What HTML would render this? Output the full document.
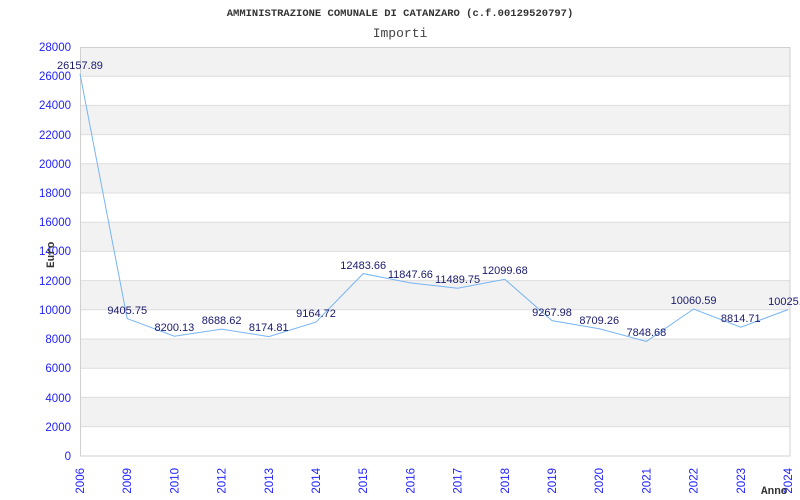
<!DOCTYPE html>
<html><head><style>body{margin:0;background:#fff}svg{display:block}</style></head><body>
<svg width="800" height="500" xmlns="http://www.w3.org/2000/svg">
<text x="400" y="16" text-anchor="middle" font-family="Liberation Mono,monospace" font-weight="bold" font-size="10.5" fill="#333">AMMINISTRAZIONE COMUNALE DI CATANZARO (c.f.00129520797)</text>
<text x="400" y="37" text-anchor="middle" font-family="Liberation Mono,monospace" font-size="13" fill="#444">Importi</text>
<g fill="#f2f2f2">
<rect x="80" y="47" width="710" height="29.2"/><rect x="80" y="105.4" width="710" height="29.2"/><rect x="80" y="163.8" width="710" height="29.2"/><rect x="80" y="222.2" width="710" height="29.2"/><rect x="80" y="280.6" width="710" height="29.2"/><rect x="80" y="339" width="710" height="29.2"/><rect x="80" y="397.4" width="710" height="29.2"/>
</g>
<g stroke="#dddddd" stroke-width="1">
<line x1="80" x2="790" y1="76.2" y2="76.2"/><line x1="80" x2="790" y1="105.4" y2="105.4"/><line x1="80" x2="790" y1="134.6" y2="134.6"/><line x1="80" x2="790" y1="163.8" y2="163.8"/><line x1="80" x2="790" y1="193" y2="193"/><line x1="80" x2="790" y1="222.2" y2="222.2"/><line x1="80" x2="790" y1="251.4" y2="251.4"/><line x1="80" x2="790" y1="280.6" y2="280.6"/><line x1="80" x2="790" y1="309.8" y2="309.8"/><line x1="80" x2="790" y1="339" y2="339"/><line x1="80" x2="790" y1="368.2" y2="368.2"/><line x1="80" x2="790" y1="397.4" y2="397.4"/><line x1="80" x2="790" y1="426.6" y2="426.6"/>
</g>
<rect x="80.5" y="47.5" width="709.5" height="408.5" fill="none" stroke="#d0d0d0"/>
<g font-family="Liberation Sans,sans-serif" font-size="11.5" fill="#2222ff" text-anchor="end">
<text x="71" y="51">28000</text><text x="71" y="80">26000</text><text x="71" y="109">24000</text><text x="71" y="139">22000</text><text x="71" y="168">20000</text><text x="71" y="197">18000</text><text x="71" y="226">16000</text><text x="71" y="255">14000</text><text x="71" y="285">12000</text><text x="71" y="314">10000</text><text x="71" y="343">8000</text><text x="71" y="372">6000</text><text x="71" y="402">4000</text><text x="71" y="431">2000</text><text x="71" y="460">0</text>
</g>
<g font-family="Liberation Sans,sans-serif" font-size="11.5" fill="#2222ff" text-anchor="end">
<text transform="translate(84,468) rotate(-90)">2006</text>
<text transform="translate(131.2,468) rotate(-90)">2009</text>
<text transform="translate(178.4,468) rotate(-90)">2010</text>
<text transform="translate(225.6,468) rotate(-90)">2012</text>
<text transform="translate(272.8,468) rotate(-90)">2013</text>
<text transform="translate(320,468) rotate(-90)">2014</text>
<text transform="translate(367.2,468) rotate(-90)">2015</text>
<text transform="translate(414.4,468) rotate(-90)">2016</text>
<text transform="translate(461.6,468) rotate(-90)">2017</text>
<text transform="translate(508.8,468) rotate(-90)">2018</text>
<text transform="translate(556,468) rotate(-90)">2019</text>
<text transform="translate(603.2,468) rotate(-90)">2020</text>
<text transform="translate(650.4,468) rotate(-90)">2021</text>
<text transform="translate(697.6,468) rotate(-90)">2022</text>
<text transform="translate(744.8,468) rotate(-90)">2023</text>
<text transform="translate(792,468) rotate(-90)">2024</text>
</g>
<polyline fill="none" stroke="#77b5f5" stroke-width="1" points="80,73.9 127.2,318.6 174.4,336.2 221.6,329.1 268.8,336.6 316,322.1 363.2,273.6 410.4,282.9 457.6,288.2 504.8,279.3 552,320.6 599.2,328.8 646.4,341.4 693.6,309 740.8,327.2 788,309.6"/>
<g font-family="Liberation Sans,sans-serif" font-size="11" fill="#1a1a6e" text-anchor="middle">
<text x="80" y="69">26157.89</text><text x="127.2" y="314">9405.75</text><text x="174.4" y="331">8200.13</text><text x="221.6" y="324">8688.62</text><text x="268.8" y="331">8174.81</text><text x="316" y="317">9164.72</text><text x="363.2" y="269">12483.66</text><text x="410.4" y="278">11847.66</text><text x="457.6" y="283">11489.75</text><text x="504.8" y="274">12099.68</text><text x="552" y="316">9267.98</text><text x="599.2" y="324">8709.26</text><text x="646.4" y="336">7848.68</text><text x="693.6" y="304">10060.59</text><text x="740.8" y="322">8814.71</text><text x="788" y="305">10025.0</text>
</g>
<text transform="translate(54,268) rotate(-90)" font-family="Liberation Mono,monospace" font-weight="bold" font-size="11" fill="#333">Euro</text>
<text x="761" y="494" font-family="Liberation Mono,monospace" font-weight="bold" font-size="11" fill="#333">Anno</text>
</svg>
</body></html>
